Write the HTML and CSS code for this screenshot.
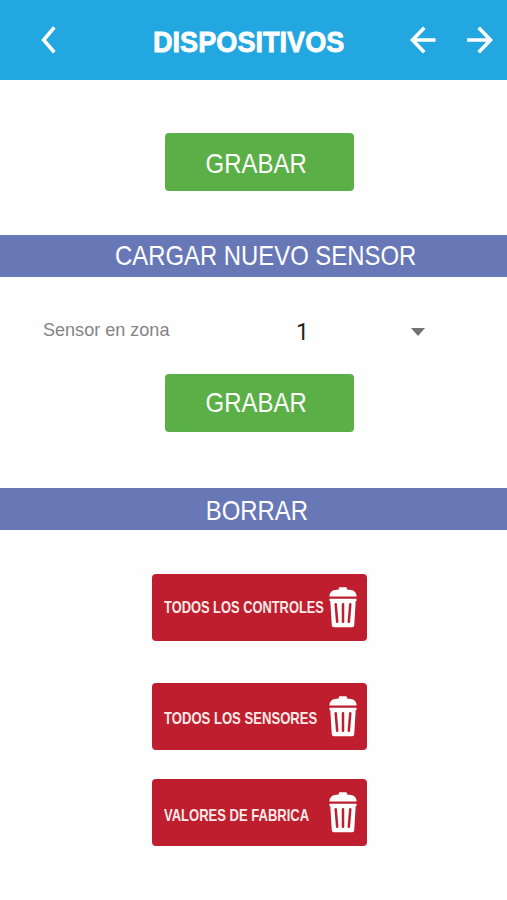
FILE: index.html
```html
<!DOCTYPE html>
<html lang="es">
<head>
  <meta charset="UTF-8" />
  <meta name="viewport" content="width=device-width, initial-scale=1.0"/>
  <title>Dispositivos</title>
  <link rel="stylesheet" href="styles.css">
</head>
<body>
  <svg width="0" height="0" class="sprite">
    <symbol id="trash" viewBox="0 0 28 41">
      <path d="M0.5 9.4V8Q1.2 3.6 6 2.9L9.8 2.5V1.2Q9.8 0.3 10.7 0.3H17Q17.9 0.3 17.9 1.2V2.5L22 2.9Q26.8 3.6 27.5 8V9.4Z"/>
      <path d="M0.5 11.8H27.5V14H26.7L25.2 38.5Q25 40.2 23.3 40.2H4.7Q3 40.2 2.8 38.5L1.3 14H0.5Z"/>
      <path class="slot" d="M6.7 17.2L8.2 34.8M14 17.2V34.8M21.3 17.2L19.8 34.8"/>
    </symbol>
  </svg>

  <header class="topbar">
    <button class="nav-btn back" aria-label="Volver">
      <svg width="16" height="28" viewBox="0 0 16 28"><path d="M14.3 1.3L3.6 14L14.3 26.3"/></svg>
    </button>
    <h1><span>DISPOSITIVOS</span></h1>
    <button class="nav-btn prev" aria-label="Anterior">
      <svg width="28" height="28" viewBox="0 0 28 28"><path d="M15.3 1.8L3.5 14L15.3 26.2M3.5 14H26.5"/></svg>
    </button>
    <button class="nav-btn next" aria-label="Siguiente">
      <svg width="28" height="28" viewBox="0 0 28 28"><path d="M12.7 1.8L24.5 14L12.7 26.2M24.5 14H1"/></svg>
    </button>
  </header>

  <main>
    <button class="btn-save"><span>GRABAR</span></button>

    <h2 class="band band-sensor"><span>CARGAR NUEVO SENSOR</span></h2>

    <div class="zone-row">
      <span class="zone-label">Sensor en zona</span>
      <span class="zone-value">1</span>
      <svg class="caret" width="14" height="8" viewBox="0 0 14 8"><path d="M0 0H14L7 8Z"/></svg>
    </div>

    <button class="btn-save btn-save-sensor"><span>GRABAR</span></button>

    <h2 class="band band-delete"><span>BORRAR</span></h2>

    <div class="delete-list">
      <button class="btn-delete controls"><span>TODOS LOS CONTROLES</span><svg class="trash"><use href="#trash"/></svg></button>
      <button class="btn-delete sensors"><span>TODOS LOS SENSORES</span><svg class="trash"><use href="#trash"/></svg></button>
      <button class="btn-delete factory"><span>VALORES DE FABRICA</span><svg class="trash"><use href="#trash"/></svg></button>
    </div>
  </main>
</body>
</html>
```
FILE: styles.css
```css
* {
  box-sizing: border-box;
}

body {
  margin: 0;
  height: 900px;
  background: #fefefe;
  font-family: "Liberation Sans", Arial, sans-serif;
  overflow: hidden;
}

button {
  border: none;
  padding: 0;
  background: none;
  color: #fff;
  font-family: inherit;
  cursor: pointer;
}

h1, h2 {
  margin: 0;
  color: #fff;
}

.sprite {
  display: block;
}

/* Top bar */
.topbar {
  display: flex;
  align-items: center;
  height: 80px;
  padding: 0 13px 0 40px;
  background: #23a7e0;
}

.nav-btn svg {
  display: block;
  fill: none;
  stroke: #fff;
  stroke-width: 3.6;
}

h1 {
  flex: 1;
  padding: 3px 0 0 97px;
  font-size: 29px;
  line-height: 34px;
  white-space: nowrap;
}

h1 span {
  display: inline-block;
  width: 192px;
  -webkit-text-stroke: 0.8px #fff;
  transform: scaleX(0.935);
  transform-origin: left;
}

.next {
  margin-left: 29px;
}

/* Sections */
main {
  display: flex;
  flex-direction: column;
  padding-top: 53px;
}

.btn-save {
  width: 189px;
  height: 58px;
  margin-left: 165px;
  padding: 3px 7px 0 0;
  border-radius: 4px;
  background: #5aaf46;
  font-size: 28px;
}

.btn-save span {
  display: inline-block;
  transform: scaleX(0.855);
}

.btn-save-sensor {
  padding: 0 7px 1px 0;
}

.band {
  display: flex;
  align-items: center;
  justify-content: center;
  height: 42px;
  background: #6878b7;
  font-size: 28px;
  font-weight: 400;
  white-space: nowrap;
}

.band span {
  transform: scaleX(0.853);
}

.band-sensor {
  margin-top: 44px;
  padding-left: 24px;
}

.band-delete {
  margin-top: 56px;
  padding: 3px 0 0 7px;
}

.zone-row {
  display: flex;
  align-items: center;
  height: 97px;
  padding: 9px 0 0 43px;
}

.zone-label {
  width: 253px;
  color: #858585;
  font-size: 19px;
  transform: scaleX(0.95);
  transform-origin: left;
}

.zone-value {
  width: 115px;
  padding-top: 4px;
  color: #222;
  font-family: Roboto, sans-serif;
  font-size: 23px;
}

.caret {
  margin-top: 4px;
  fill: #707372;
}

/* Delete buttons */
.delete-list {
  display: flex;
  flex-direction: column;
  padding: 44px 0 0 152px;
}

.btn-delete {
  display: flex;
  align-items: center;
  width: 215px;
  height: 67px;
  padding-left: 12px;
  border-radius: 4px;
  background: #be1e2d;
  color: #ffe9e8;
  font-size: 17px;
  font-weight: 700;
  text-align: left;
  white-space: nowrap;
}

.btn-delete span {
  width: 165px;
  transform: scaleX(0.757);
  transform-origin: left;
}

.sensors {
  margin-top: 42px;
}

.sensors span {
  padding-top: 5px;
  transform: scaleX(0.77);
}

.factory {
  margin-top: 29px;
}

.factory span {
  padding-top: 7px;
  transform: scaleX(0.766);
}

.trash {
  width: 28px;
  height: 41px;
  fill: #fff;
}

.slot {
  fill: none;
  stroke: #be1e2d;
  stroke-width: 2.5;
  stroke-linecap: round;
}
```
